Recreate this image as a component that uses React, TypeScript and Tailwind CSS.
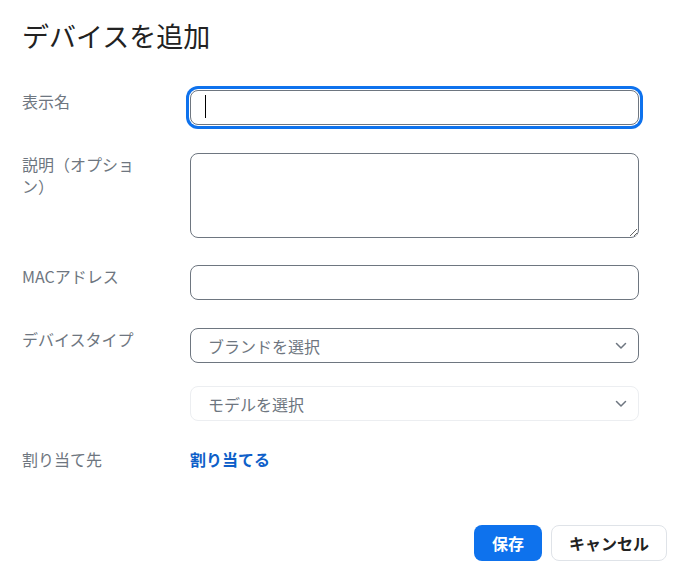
import React from "react";

const font = { fontFamily: '"Noto Sans CJK JP", "Noto Sans", sans-serif' };

function Chevron() {
  return (
    <svg width="12" height="8" viewBox="0 0 12 8" fill="none" className="shrink-0">
      <path d="M1.5 1.5L6 6L10.5 1.5" stroke="#6e7680" strokeWidth="1.5" strokeLinecap="round" strokeLinejoin="round" />
    </svg>
  );
}

function Label({ children }: { children: React.ReactNode }) {
  return (
    <div className="w-[168px] shrink-0 pr-[46px] text-[16px] leading-[22px] text-[#6e7680]">{children}</div>
  );
}

export default function App() {
  return (
    <div className="w-[687px] h-[583px] bg-white pl-[22px] pr-[20px] pt-[18px] text-[#222]" style={font}>
      <h1 className="text-[27px] leading-[36px] font-normal text-[#222]">デバイスを追加</h1>

      <div className="mt-[36px] flex items-start">
        <Label>表示名</Label>
        <div className="relative w-[449px]">
          <input
            className="block w-full h-[35px] rounded-[8px] border border-[#6e7680] bg-white px-[14px] text-[16px] outline-none shadow-[0_0_0_1px_#ffffff,0_0_0_4px_#0e72ed]"
            style={font}
          />
          <span className="absolute left-[15px] top-[5px] h-[23px] w-px bg-black" />
        </div>
      </div>

      <div className="mt-[28px] flex items-start">
        <Label>説明（オプション）</Label>
        <textarea
          className="block w-[449px] h-[85px] rounded-[8px] border border-[#6e7680] bg-white px-[14px] py-[6px] text-[16px] outline-none"
          style={font}
        />
      </div>

      <div className="mt-[27px] flex items-start">
        <Label>MACアドレス</Label>
        <input
          className="block w-[449px] h-[35px] rounded-[8px] border border-[#6e7680] bg-white px-[14px] text-[16px] outline-none"
          style={font}
        />
      </div>

      <div className="mt-[28px] flex items-start">
        <Label>デバイスタイプ</Label>
        <div className="flex w-[449px] h-[35px] items-center justify-between rounded-[8px] border border-[#6e7680] bg-white pl-[17px] pr-[11px]">
          <span className="text-[16px] text-[#6e7680]">ブランドを選択</span>
          <Chevron />
        </div>
      </div>

      <div className="mt-[23px] flex items-start">
        <div className="w-[168px] shrink-0" />
        <div className="flex w-[449px] h-[35px] items-center justify-between rounded-[8px] border border-[#eceef1] bg-white pl-[17px] pr-[11px]">
          <span className="text-[16px] text-[#6e7680]">モデルを選択</span>
          <Chevron />
        </div>
      </div>

      <div className="mt-[27px] flex items-start">
        <Label>割り当て先</Label>
        <a className="text-[16px] leading-[22px] font-bold text-[#0e5fc9] cursor-pointer">割り当てる</a>
      </div>

      <div className="mt-[55px] flex justify-end gap-[9px]">
        <button className="h-[36px] w-[68px] rounded-[8px] bg-[#0e72ed] text-[16px] font-bold text-white" style={font}>
          保存
        </button>
        <button className="h-[36px] w-[116px] rounded-[8px] border border-[#dfe3e8] bg-white text-[16px] font-bold text-[#222]" style={font}>
          キャンセル
        </button>
      </div>
    </div>
  );
}
